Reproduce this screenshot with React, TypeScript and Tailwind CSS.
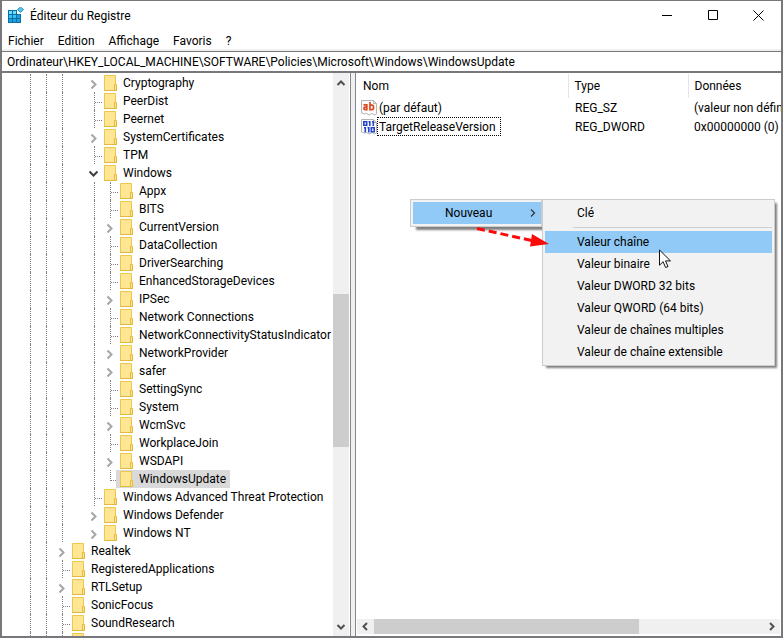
import type { ReactNode } from 'react'

type Guide = 'line' | 'none'
type Toggle = 'closed' | 'open' | 'leaf' | 'last'

interface TreeEntry {
  name: string
  depth: 'root' | 'key' | 'subkey'
  toggle: Toggle
  selected?: boolean
}

const GUIDES: Record<TreeEntry['depth'], Guide[]> = {
  root: ['line', 'line'],
  key: ['line', 'line', 'line', 'none'],
  subkey: ['line', 'line', 'line', 'none', 'line'],
}

const TREE: TreeEntry[] = [
  { name: 'Cryptography', depth: 'key', toggle: 'closed' },
  { name: 'PeerDist', depth: 'key', toggle: 'leaf' },
  { name: 'Peernet', depth: 'key', toggle: 'leaf' },
  { name: 'SystemCertificates', depth: 'key', toggle: 'closed' },
  { name: 'TPM', depth: 'key', toggle: 'leaf' },
  { name: 'Windows', depth: 'key', toggle: 'open' },
  { name: 'Appx', depth: 'subkey', toggle: 'leaf' },
  { name: 'BITS', depth: 'subkey', toggle: 'leaf' },
  { name: 'CurrentVersion', depth: 'subkey', toggle: 'closed' },
  { name: 'DataCollection', depth: 'subkey', toggle: 'leaf' },
  { name: 'DriverSearching', depth: 'subkey', toggle: 'leaf' },
  { name: 'EnhancedStorageDevices', depth: 'subkey', toggle: 'leaf' },
  { name: 'IPSec', depth: 'subkey', toggle: 'closed' },
  { name: 'Network Connections', depth: 'subkey', toggle: 'leaf' },
  { name: 'NetworkConnectivityStatusIndicator', depth: 'subkey', toggle: 'leaf' },
  { name: 'NetworkProvider', depth: 'subkey', toggle: 'closed' },
  { name: 'safer', depth: 'subkey', toggle: 'closed' },
  { name: 'SettingSync', depth: 'subkey', toggle: 'leaf' },
  { name: 'System', depth: 'subkey', toggle: 'leaf' },
  { name: 'WcmSvc', depth: 'subkey', toggle: 'closed' },
  { name: 'WorkplaceJoin', depth: 'subkey', toggle: 'leaf' },
  { name: 'WSDAPI', depth: 'subkey', toggle: 'closed' },
  { name: 'WindowsUpdate', depth: 'subkey', toggle: 'last', selected: true },
  { name: 'Windows Advanced Threat Protection', depth: 'key', toggle: 'leaf' },
  { name: 'Windows Defender', depth: 'key', toggle: 'closed' },
  { name: 'Windows NT', depth: 'key', toggle: 'closed' },
  { name: 'Realtek', depth: 'root', toggle: 'closed' },
  { name: 'RegisteredApplications', depth: 'root', toggle: 'leaf' },
  { name: 'RTLSetup', depth: 'root', toggle: 'closed' },
  { name: 'SonicFocus', depth: 'root', toggle: 'leaf' },
  { name: 'SoundResearch', depth: 'root', toggle: 'leaf' },
  { name: '', depth: 'root', toggle: 'leaf' },
]

const MENUS = ['Fichier', 'Edition', 'Affichage', 'Favoris', '?']

const NEW_VALUES = [
  'Valeur chaîne',
  'Valeur binaire',
  'Valeur DWORD 32 bits',
  'Valeur QWORD (64 bits)',
  'Valeur de chaînes multiples',
  'Valeur de chaîne extensible',
]

function RegistryIcon() {
  return (
    <svg width="16" height="16" viewBox="0 0 16 16" aria-hidden="true">
      <path d="M0 3h9v4h4v9H0z" fill="#0a6fa8" />
      <path d="M1 4h3v3H1zM5 4h3v3H5z" fill="#6fdcfb" />
      <path d="M1 8h3v3H1zM5 8h3v3H5z" fill="#35c3f2" />
      <path d="M9 8h3v3H9zM1 12h3v3H1zM5 12h3v3H5zM9 12h3v3H9z" fill="#1fa2dc" />
      <path d="M12.500 0L15.500 2.500L12.500 5.500L9.500 2.500z" fill="#52c8f0" stroke="#2f8fba" />
    </svg>
  )
}

function FolderIcon() {
  return (
    <svg className="ml-0.5 shrink-0" width="13" height="16" viewBox="0 0 13 16" aria-hidden="true">
      <path d="M.5.5h11v15H.5z" fill="#ffe694" stroke="#eec747" />
      <path d="M10.500 9.500h2v6h-2z" fill="#ffe694" stroke="#e5b93a" />
      <path d="M0 15.500h13" stroke="#e5b93a" />
    </svg>
  )
}

function Page({ children }: { children: ReactNode }) {
  return (
    <svg className="shrink-0" width="16" height="16" viewBox="0 0 16 16" aria-hidden="true">
      <path d="M.5.5h12l3 3v10.500l-2 1-2.500-1.500-3 1.500-2.500-1.500-2 .5-3-1z" fill="#fafafa" stroke="#b4b4b4" />
      <path d="M12.500.5v3h3" fill="none" stroke="#b4b4b4" />
      {children}
    </svg>
  )
}

function StringIcon() {
  return (
    <Page>
      <g fill="none" stroke="#dd4a22" strokeWidth="1.700">
        <path d="M2.500 4.800h3.300v5.700M6 7.200H4c-1.500 0-1.500 2.400 0 2.400h2" />
        <path d="M9 2v7.600h2.200c1.800 0 1.800-4.400 0-4.400H9" />
      </g>
    </Page>
  )
}

function BinaryIcon() {
  return (
    <Page>
      <g fill="none" stroke="#2846cc" strokeWidth="1.600">
        <path d="M2.800 2.800h2.900v3.400H2.800z" />
        <path d="M8.800 2v5M12.300 2v5M7.500 2.800h1.500M11 2.800h1.500" />
        <path d="M4.300 8v5.500M7.800 8v5.500M3 8.800h1.500M6.500 8.800h1.500" />
        <path d="M10.300 8.800h2.900v3.900h-2.900z" />
      </g>
    </Page>
  )
}

function Chevron({ d, className = '' }: { d: string; className?: string }) {
  return (
    <svg className={className} width="16" height="16" viewBox="0 0 16 16" fill="none" stroke="currentColor" aria-hidden="true">
      <path d={d} strokeWidth="2" />
    </svg>
  )
}

function TreeCell({ toggle }: { toggle: Toggle }) {
  if (toggle === 'closed') {
    return (
      <span className="w-4 shrink-0 pt-0.5 text-[#a6a6a6]">
        <Chevron d="M5.500 4.500l4 4-4 4" />
      </span>
    )
  }
  if (toggle === 'open') {
    return (
      <span className="w-4 shrink-0 pt-0.5 text-[#404040]">
        <Chevron d="M3.500 5.500l4 4 4-4" />
      </span>
    )
  }
  return (
    <span className="flex w-4 shrink-0 pl-2">
      <span className={`border-l border-dotted border-[#808080] ${toggle === 'last' ? 'h-[11px]' : 'h-[18px]'}`} />
      <span className="mt-[10px] h-px grow border-t border-dotted border-[#808080]" />
    </span>
  )
}

function TreeRow({ entry }: { entry: TreeEntry }) {
  return (
    <li className="flex h-[18px] shrink-0 pl-5">
      {GUIDES[entry.depth].map((guide, index) => (
        <span key={index} className="w-4 shrink-0 pl-2">
          {guide === 'line' && <span className="block h-full w-px border-l border-dotted border-[#808080]" />}
        </span>
      ))}
      <TreeCell toggle={entry.toggle} />
      <button
        type="button"
        aria-label={entry.name || 'Clé'}
        className={`flex h-[18px] items-center whitespace-nowrap pr-1 ${entry.selected ? '-ml-0.5 bg-[#d9d9d9] pl-0.5' : ''}`}
      >
        <FolderIcon />
        <span className="pl-1.5">{entry.name}</span>
      </button>
    </li>
  )
}

function KeyTree() {
  return (
    <div className="flex w-[349px] shrink-0 border-r border-[#828790] bg-white">
      <ul className="flex min-w-0 grow flex-col overflow-hidden pt-px">
        {TREE.map((entry) => (
          <TreeRow key={entry.name} entry={entry} />
        ))}
      </ul>
      <div className="mr-px flex w-4 shrink-0 flex-col bg-[#f0f0f0] text-[#505050]">
        <button type="button" aria-label="Défiler vers le haut" className="h-[17px]">
          <Chevron d="M4.500 11l3.500-3.500 3.500 3.500" />
        </button>
        <div className="grow-[203]" />
        <div className="grow-[153] bg-[#cdcdcd]" />
        <div className="grow-[171]" />
        <button type="button" aria-label="Défiler vers le bas" className="h-[17px]">
          <Chevron d="M4.500 5l3.500 3.500 3.500-3.500" />
        </button>
      </div>
    </div>
  )
}

function ValueList() {
  return (
    <div className="flex min-w-0 grow flex-col border-l border-[#828790] bg-white">
      <div className="grow overflow-hidden pt-px">
        <table className="w-[560px] table-fixed border-collapse whitespace-nowrap text-left">
          <colgroup>
            <col className="w-[212px]" />
            <col className="w-[120px]" />
            <col />
          </colgroup>
          <thead>
            <tr className="h-6">
              <th className="border-r border-[#e5e5e5] p-0 pl-[7px] font-normal">Nom</th>
              <th className="border-r border-[#e5e5e5] p-0 pl-1.5 font-normal">Type</th>
              <th className="p-0 pl-1.5 font-normal">Données</th>
            </tr>
          </thead>
          <tbody className="leading-[18px]">
            <tr className="h-[19px]">
              <td className="p-0">
                <span className="flex h-[19px] items-center pl-[5px]">
                  <StringIcon />
                  <span className="border-x border-transparent pl-px">(par défaut)</span>
                </span>
              </td>
              <td className="p-0 pl-[7px]">REG_SZ</td>
              <td className="p-0 pl-1.5">(valeur non définie)</td>
            </tr>
            <tr className="h-[19px]">
              <td className="p-0">
                <span className="flex h-[19px] items-center pl-[5px]">
                  <BinaryIcon />
                  <span className="h-[19px] border border-dotted border-black pl-px pr-1">TargetReleaseVersion</span>
                </span>
              </td>
              <td className="p-0 pl-[7px]">REG_DWORD</td>
              <td className="p-0 pl-1.5">0x00000000 (0)</td>
            </tr>
          </tbody>
        </table>
      </div>
      <div className="mx-px mb-0.5 flex h-[15px] shrink-0 bg-[#f0f0f0] text-[#505050]">
        <button type="button" aria-label="Défiler vers la gauche" className="w-[17px]">
          <Chevron d="M10 4l-3.500 3.500 3.500 3.500" />
        </button>
        <div className="grow-[265] bg-[#cdcdcd]" />
        <div className="grow-[124]" />
        <button type="button" aria-label="Défiler vers la droite" className="w-[17px]">
          <Chevron d="M7 4l3.500 3.500-3.500 3.500" />
        </button>
      </div>
    </div>
  )
}

function ContextMenu() {
  return (
    <div className="absolute left-[408px] top-[198px] flex items-start">
      <div className="w-[132px] border border-[#ccc] bg-[#f2f2f2] p-0.5 pr-0 shadow-[5px_4px_2px_-1px_#808080]">
        <button type="button" className="flex h-[22px] w-full items-center justify-between bg-[#91c9f7] pl-8">
          Nouveau
          <svg className="mr-1" width="8" height="10" viewBox="0 0 8 10" fill="none" stroke="#333" aria-hidden="true">
            <path d="M2 1.500L5.500 5L2 8.500" strokeWidth="1.200" />
          </svg>
        </button>
      </div>
      <div className="w-[233px] border border-[#ccc] bg-[#f2f2f2] p-0.5 shadow-[3px_3px_2px_-1px_#808080]">
        <button type="button" className="flex h-[22px] w-full items-center pl-8">
          Clé
        </button>
        <div className="my-[3px] ml-7 h-px bg-[#d0d0d0]" />
        {NEW_VALUES.map((label, index) => (
          <button
            key={label}
            type="button"
            className={`flex h-[22px] w-full items-center pl-8 ${index === 0 ? 'bg-[#91c9f7]' : ''}`}
          >
            {label}
          </button>
        ))}
      </div>
    </div>
  )
}

function Pointers() {
  return (
    <>
      <svg className="absolute left-[468px] top-[221px]" width="82" height="30" viewBox="0 0 82 30" aria-hidden="true">
        <path d="M7 6.500L64 19" stroke="#fa0a0a" strokeWidth="3" strokeDasharray="8 4" />
        <path d="M62 12L79 22L60 24.500z" fill="#fa0a0a" />
      </svg>
      <svg className="absolute left-[657px] top-[248px]" width="13" height="20" viewBox="0 0 13 20" aria-hidden="true">
        <path d="M.5 1v15.200l3.600-3.500 2.500 5.800 2.400-1-2.500-5.600h5z" fill="#fff" stroke="#111" />
      </svg>
    </>
  )
}

export default function App() {
  return (
    <div className="relative flex h-screen flex-col overflow-hidden border-x-2 border-b-2 border-t border-[#77777c] bg-white font-['Roboto','Noto_Sans',sans-serif] text-xs leading-4 text-black">
      <header className="flex h-7 shrink-0 items-center pl-1.5">
        <RegistryIcon />
        <h1 className="grow pl-1.5 pt-0.5">Éditeur du Registre</h1>
        <div className="flex">
          <button type="button" aria-label="Réduire" className="flex w-[45px] justify-center">
            <svg width="11" height="11" viewBox="0 0 11 11" stroke="#000">
              <path d="M0 5.500h10" />
            </svg>
          </button>
          <button type="button" aria-label="Agrandir" className="flex w-[46px] justify-center">
            <svg width="11" height="11" viewBox="0 0 11 11" fill="none" stroke="#000">
              <path d="M.5.5h9v9h-9z" />
            </svg>
          </button>
          <button type="button" aria-label="Fermer" className="flex w-[45px] justify-center">
            <svg width="11" height="11" viewBox="0 0 11 11" stroke="#000">
              <path d="M.5.5l10 10M10.500.5l-10 10" />
            </svg>
          </button>
        </div>
      </header>
      <nav className="flex h-[22px] shrink-0 items-center gap-3.5 border-b-2 border-[#f0f0f0] pl-1.5 pt-1">
        {MENUS.map((menu) => (
          <button key={menu} type="button">
            {menu}
          </button>
        ))}
      </nav>
      <input
        type="text"
        aria-label="Chemin de la clé"
        defaultValue="Ordinateur\HKEY_LOCAL_MACHINE\SOFTWARE\Policies\Microsoft\Windows\WindowsUpdate"
        className="h-[22px] w-full shrink-0 border-b-2 border-t border-[#77777c] bg-white pl-[5px] outline-none"
      />
      <main className="flex min-h-0 grow gap-1 bg-[#f0f0f0]">
        <KeyTree />
        <ValueList />
      </main>
      <ContextMenu />
      <Pointers />
    </div>
  )
}
